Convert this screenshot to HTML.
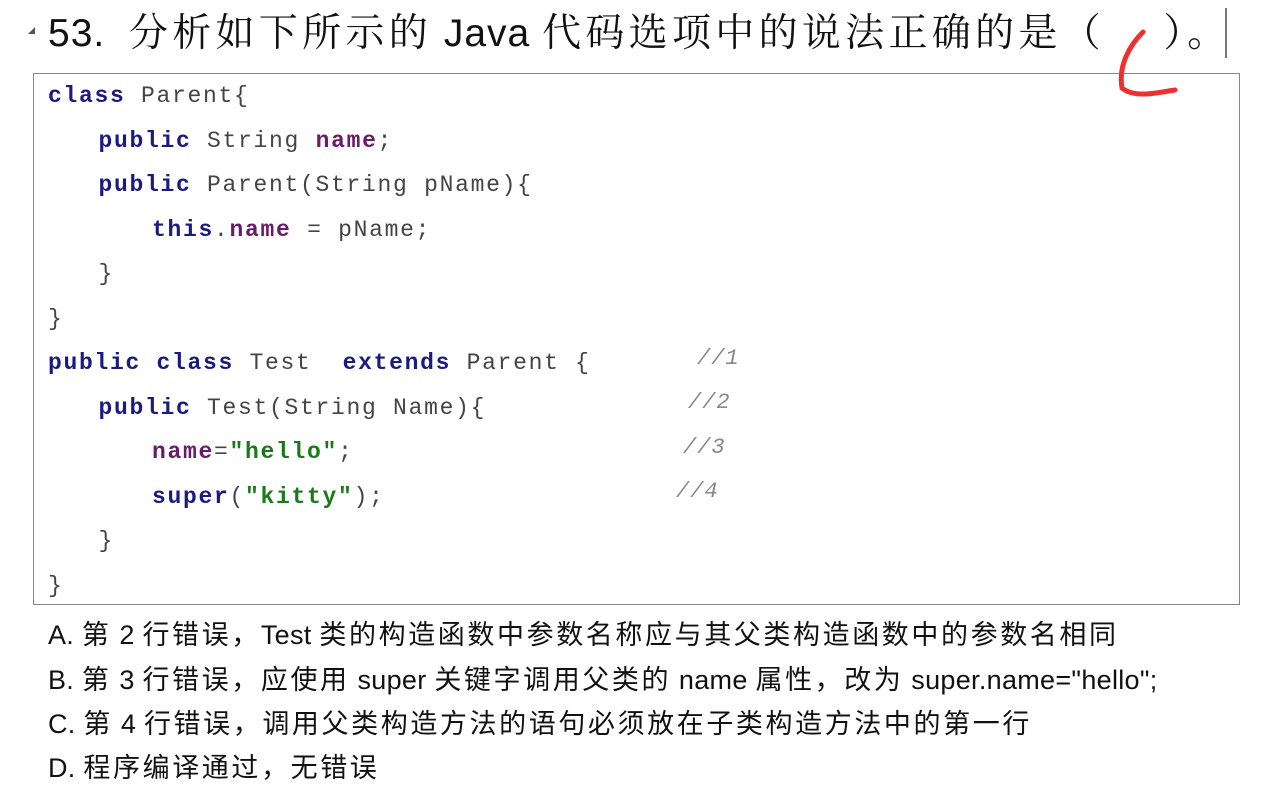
<!DOCTYPE html>
<html><head><meta charset="utf-8"><style>
body{margin:0;width:1264px;height:784px;background:#fff;overflow:hidden;position:relative;font-family:"Liberation Sans","Noto Sans CJK SC",sans-serif;color:#111}
.t{position:absolute;left:48px;top:9px;font-size:39px;letter-spacing:4.3px;white-space:nowrap;line-height:50px;font-family:"Liberation Sans","Noto Serif CJK SC",serif}
.t .l{letter-spacing:1px;font-family:"Liberation Sans",sans-serif}
.tri{position:absolute;left:28px;top:27px;width:0;height:0;border-left:7px solid transparent;border-bottom:7px solid #555}
.cur{position:absolute;left:1225px;top:8px;width:2px;height:50px;background:#777}
.box{position:absolute;left:33px;top:73px;width:1207px;height:532px;border:1px solid #888;box-sizing:border-box}
.code{position:absolute;left:48px;top:74px;font-family:"Liberation Mono",monospace;font-size:23px;letter-spacing:1.7px;color:#444;line-height:44.5px;white-space:pre}
.k{color:#1a1a80;font-weight:bold}.n{color:#6a1a6a;font-weight:bold}.s{color:#1a7a1a;font-weight:bold}
.ind1{margin-left:4px}.ind2{margin-left:11px}
.c{position:absolute;font-family:"Liberation Mono",monospace;font-style:italic;font-size:22px;color:#888;letter-spacing:1px}
.o{position:absolute;left:48px;font-size:27px;letter-spacing:2.6px;white-space:nowrap}
.o i{font-style:normal;letter-spacing:0.3px;font-size:27px}
</style></head><body>
<div class="tri"></div>
<div class="t"><span class="l">53.&nbsp; </span>分析如下所示的<span class="l"> Java </span>代码选项中的说法正确的是（　&nbsp;）。</div>
<div class="cur"></div>
<div class="box"></div>
<div class="code"><span class="k">class</span> Parent{
   <span class="k ind1">public</span> String <span class="n">name</span>;
   <span class="k ind1">public</span> Parent(String pName){
      <span class="k ind2">this</span>.<span class="n">name</span> = pName;
   <span class="ind1">}</span>
}
<span class="k">public class</span> Test  <span class="k">extends</span> Parent {
   <span class="k ind1">public</span> Test(String Name){
      <span class="n ind2">name</span>=<span class="s">"hello"</span>;
      <span class="k ind2">super</span>(<span class="s">"kitty"</span>);
   <span class="ind1">}</span>
}</div>
<div class="c" style="left:697px;top:346px">//1</div>
<div class="c" style="left:688px;top:390px">//2</div>
<div class="c" style="left:683px;top:435px">//3</div>
<div class="c" style="left:676px;top:479px">//4</div>
<div class="o" style="top:613px"><i>A. </i>第<i> 2 </i>行错误，<i>Test </i>类的构造函数中参数名称应与其父类构造函数中的参数名相同</div>
<div class="o" style="top:658px"><i>B. </i>第<i> 3 </i>行错误，应使用<i> super </i>关键字调用父类的<i> name </i>属性，改为<i> super.name="hello";</i></div>
<div class="o" style="top:702px"><i>C. </i>第<i> 4 </i>行错误，调用父类构造方法的语句必须放在子类构造方法中的第一行</div>
<div class="o" style="top:746px"><i>D. </i>程序编译通过，无错误</div>
<svg style="position:absolute;left:0;top:0" width="1264" height="784"><path d="M1143 32 C1130 45 1118 65 1122 88 C1135 99 1160 92 1175 90" fill="none" stroke="#f03030" stroke-width="5" stroke-linecap="round"/></svg>
</body></html>
